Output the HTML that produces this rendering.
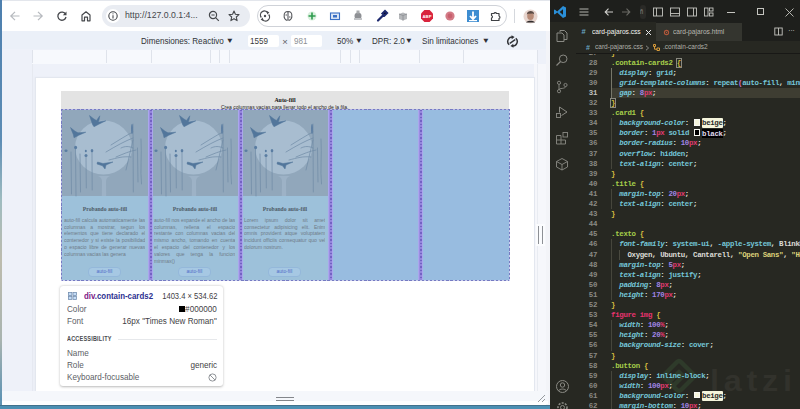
<!DOCTYPE html>
<html><head><meta charset="utf-8">
<style>
*{margin:0;padding:0;box-sizing:border-box}
html,body{width:800px;height:409px;overflow:hidden;background:#fff;font-family:"Liberation Sans",sans-serif}
.a{position:absolute}
.t{position:absolute;white-space:nowrap;line-height:1}
svg{position:absolute;overflow:visible}
/* browser */
#desk{left:0;top:0;width:2px;height:409px;background:linear-gradient(#4d7fae 0,#5d8db5 140px,#9fbcc0 200px,#bdbcae 260px,#a9b4b0 340px,#5f93b3 400px)}
#deskb{left:0;top:404.5px;width:550px;height:4.5px;background:#4b8fb3;border-top:1px solid #41718c}
#topline{left:2px;top:0;width:548px;height:1px;background:#e3e6ec}
#tb{left:2px;top:1px;width:548px;height:30px;background:#fff}
#dt{left:2px;top:31px;width:548px;height:18px;background:#ebf0f8}
#vp{left:2px;top:49px;width:548px;height:355px;background:#eef1f9}
#ruler{left:32px;top:49.5px;width:505px;height:14px;background:#f7f9fd}
.rl{position:absolute;top:50px;width:1px;height:13px;background:#dfe3eb}
#page{left:35.6px;top:77.6px;width:498px;height:313.7px;background:#fff;box-shadow:0 0 0 1px #e3e7ef,-1px 0 2px 1px #e9ecf3}
#botbar{left:2px;top:391.3px;width:546px;height:13.2px;background:linear-gradient(#f5f7fb 0,#f5f7fb 9.7px,#fdfeff 9.7px)}
.pill{position:absolute;border-radius:11px}
.dtt{font-size:9.1px;color:#303236;transform:scaleX(0.89);transform-origin:0 0}
.tri{font-size:7.5px;color:#2f3035;transform:scaleX(1.1)}
/* vscode */
#vs{left:550px;top:0;width:250px;height:409px;background:#272822;overflow:hidden}

.card{top:110px;width:88px;height:170.3px;background:#9dc1da;overflow:hidden}
.ctitle{position:absolute;top:206.6px;width:88px;text-align:center;font:bold 5.67px/1 'Liberation Serif',serif;color:#4d5a66;white-space:nowrap}
.ctext{position:absolute;top:216.8px;width:81.3px;font-size:5px;line-height:6.8px;color:#6f7c88}
.ctext div{text-align:justify;text-align-last:justify;white-space:nowrap;overflow:hidden}
.ctext div.l{text-align-last:left}
.cbtn{position:absolute;top:267.4px;width:32.2px;height:9.4px;border:0.8px solid #94b8da;border-radius:4px;font-size:4.93px;line-height:7.8px;text-align:center;color:#4f6cc8;background:#a6c8e3}
.gap{position:absolute;top:110px;width:5px;height:170.3px;background:#9a8de2;border-left:0.6px solid #aaa6ec;border-right:0.6px solid #aaa6ec}.gap::after{content:"";position:absolute;left:1.2px;top:0;width:2px;height:100%;background:repeating-linear-gradient(180deg,#7461c4 0,#7461c4 1.4px,#9486dc 1.4px,#9486dc 3.4px)}

.tipt{font-size:9.2px;color:#5d6066;transform:scaleX(0.885);transform-origin:0 0}.tipt.r{transform-origin:100% 0}

.vtab{font-size:7.5px;color:#fff;transform:scaleX(0.885);transform-origin:0 0}
.vbc{font-size:7.4px;color:#b0b0a9;transform:scaleX(0.885);transform-origin:0 0}
.ln{position:absolute;left:579.2px;width:17.8px;text-align:right;font:bold 7.4px/10.1px "Liberation Mono",monospace;letter-spacing:-0.34px;color:#8a8a84;height:10.1px}
.ln.cur{color:#c2c2bf}
.cl{position:absolute;left:611.1px;white-space:pre;font:bold 7.4px/10.1px "Liberation Mono",monospace;letter-spacing:-0.34px;color:#f8f8f2;height:10.1px}
.ks{color:#a6cf4a}.kb,.kbb{color:#d4bd40}.kbb{outline:0.8px solid #8a8a80;outline-offset:-0.4px}
.kp{color:#74c6d8;font-style:italic}.ko{color:#e4e4de}.kv{color:#74c6d8}.kn{color:#a086e6}.ku{color:#e03a70}
.kq{color:#ddd27a}.kt{color:#e8336f}.kw{color:#dcdcd6}.kf{color:#da70d6}
.sw{display:inline-block;width:9px;height:6.4px;position:relative;vertical-align:-0.5px}
.sw::after{content:"";position:absolute;left:1.2px;top:0;width:6px;height:6.4px;background:#f5f5dc;border:0.8px solid #f8f8f2;box-sizing:border-box}
.sw.sk::after{background:#000}
.khl{background:#f5f5dc;color:#2a2a26;padding:0.8px 0 0.9px;border-radius:1px}
.khk{background:#000;color:#e0dcf0;padding:0.8px 0 0.9px}
</style></head>
<body>
<div id="desk" class="a"></div>
<div id="deskb" class="a"></div>
<div id="topline" class="a"></div>
<div id="tb" class="a"></div>
<!-- nav icons -->
<svg style="left:9px;top:10px" width="12" height="12" viewBox="0 0 12 12"><path d="M10.5 6H2M6 1.8L1.8 6 6 10.2" fill="none" stroke="#b6b9be" stroke-width="1.2"/></svg>
<svg style="left:32px;top:10px" width="12" height="12" viewBox="0 0 12 12"><path d="M1.5 6H10M6 1.8L10.2 6 6 10.2" fill="none" stroke="#b6b9be" stroke-width="1.2"/></svg>
<svg style="left:55.5px;top:10px" width="12" height="12" viewBox="0 0 12 12"><path d="M9.6 4.2A4.1 4.1 0 1 0 10 7" fill="none" stroke="#45474b" stroke-width="1.3"/><path d="M10.5 1.5V5.2H6.8Z" fill="#45474b"/></svg>
<svg style="left:79.5px;top:10px" width="12" height="12" viewBox="0 0 12 12"><path d="M2 10.8V5L6 1.8 10 5V10.8H7.5V7.2H4.5V10.8Z" fill="none" stroke="#45474b" stroke-width="1.2" stroke-linejoin="round"/></svg>
<!-- address bar -->
<div class="pill" style="left:102px;top:5px;width:148px;height:22px;background:#e9ecf2"></div>
<div class="a" style="left:106px;top:9px;width:14px;height:14px;border-radius:7px;background:#fff"></div>
<svg style="left:108px;top:11px" width="10" height="10" viewBox="0 0 10 10"><circle cx="5" cy="5" r="4.2" fill="none" stroke="#45474b" stroke-width="1.1"/><path d="M5 4.2V7.4" stroke="#45474b" stroke-width="1.1"/><circle cx="5" cy="2.8" r="0.6" fill="#45474b"/></svg>
<div class="t" style="left:125px;top:10.3px;font-size:9.8px;color:#45474b;transform:scaleX(0.89);transform-origin:0 0">http://127.0.0.1:4...</div>
<svg style="left:208px;top:10px" width="12" height="12" viewBox="0 0 12 12"><circle cx="5" cy="5" r="3.6" fill="none" stroke="#45474b" stroke-width="1.2"/><path d="M7.6 7.6L10.8 10.8M3.4 5H6.6" stroke="#45474b" stroke-width="1.2"/></svg>
<svg style="left:228px;top:9.5px" width="12" height="12" viewBox="0 0 12 12"><path d="M6 1L7.4 4.3 11 4.6 8.3 7 9.1 10.6 6 8.7 2.9 10.6 3.7 7 1 4.6 4.6 4.3Z" fill="none" stroke="#45474b" stroke-width="1.1" stroke-linejoin="round"/></svg>
<!-- extensions pill -->
<div class="pill" style="left:257px;top:5px;width:250px;height:22px;background:#fff;border:1px solid #cfd2d8"></div>
<svg style="left:259px;top:9.5px" width="12" height="12" viewBox="0 0 12 12"><path d="M2.3 7.5A4 4 0 0 1 8.8 2.6M9.7 4.5A4 4 0 0 1 3.2 9.4" fill="none" stroke="#4a4c50" stroke-width="1.3"/><path d="M7.2 1L10.4 2.2 8.4 4.6Z M4.8 11L1.6 9.8 3.6 7.4Z" fill="#4a4c50"/><circle cx="6" cy="6" r="1.2" fill="#4a4c50"/></svg>
<svg style="left:282px;top:9.5px" width="12" height="12" viewBox="0 0 12 12"><path d="M6 1.5C3 1.5 2 3.5 2.2 5.5 1.8 7.5 3 10 5 10.2V11M6 1.5C9 1.5 10 3.5 9.8 5.5 10.2 7.5 9 10 7 10.2V11M6 2V10" fill="none" stroke="#55575b" stroke-width="1.1"/><path d="M3.5 5H5M7 7H8.5" stroke="#55575b" stroke-width="1"/></svg>
<svg style="left:306px;top:10px" width="12" height="12" viewBox="0 0 12 12"><circle cx="6" cy="6" r="4.5" fill="#d8efdc"/><path d="M6 2.5V9.5M2.5 6H9.5" stroke="#2e9b4e" stroke-width="1.6"/></svg>
<svg style="left:329px;top:10px" width="12" height="12" viewBox="0 0 12 12"><rect x="1.5" y="3" width="9" height="6.5" fill="#dde6f5" stroke="#3a6fc4" stroke-width="1.1"/><rect x="4" y="5" width="4" height="2.5" fill="#3a6fc4"/></svg>
<svg style="left:352px;top:9px" width="12" height="12" viewBox="0 0 12 12"><ellipse cx="6" cy="7" rx="3.5" ry="3.5" fill="#8e9094"/><rect x="4.5" y="1.5" width="3" height="3" fill="#a9abae"/><rect x="2" y="9" width="8" height="2" fill="#c2c4c7"/></svg>
<svg style="left:376px;top:9.5px" width="12" height="12" viewBox="0 0 12 12"><path d="M2 10.5L7.5 5M6.5 3.5L9 1 11 3 8.5 5.5Z" stroke="#1e2a6e" stroke-width="2.2" stroke-linecap="round"/></svg>
<svg style="left:397px;top:9.5px" width="12" height="12" viewBox="0 0 12 12"><path d="M2 4L6 2.5 10 4V9L6 10.5 2 9Z" fill="#b5b7ba"/><path d="M6 5.5V10.5M2 4L6 5.5 10 4" stroke="#8f9195" stroke-width="0.9" fill="none"/></svg>
<svg style="left:420px;top:9px" width="14" height="14" viewBox="0 0 14 14"><path d="M4.4 1H9.6L13 4.4V9.6L9.6 13H4.4L1 9.6V4.4Z" fill="#d9243d"/><text x="7" y="8.8" font-size="4.2" font-family="Liberation Sans" font-weight="bold" fill="#fff" text-anchor="middle">ABP</text></svg>
<svg style="left:444px;top:9.5px" width="12" height="12" viewBox="0 0 12 12"><circle cx="6" cy="6" r="4.6" fill="#d37b86"/><circle cx="6" cy="6" r="2.4" fill="#c8606e"/></svg>
<svg style="left:466px;top:8.5px" width="14" height="14" viewBox="0 0 14 14"><rect x="1" y="1" width="12" height="12" fill="#3d8dd1"/><path d="M7 2.5V10M4 7L7 10.2 10 7" stroke="#fff" stroke-width="1.8" fill="none"/><rect x="3" y="11" width="8" height="1.2" fill="#fff"/></svg>
<svg style="left:490px;top:9.5px" width="12" height="12" viewBox="0 0 12 12"><path d="M1.5 3.5H4A1.3 1.3 0 0 1 6.5 3.5H9V6A1.3 1.3 0 0 1 9 8.5V10.5H1.5V8A1.3 1.3 0 0 0 1.5 5.5Z" fill="none" stroke="#3f4145" stroke-width="1.2" stroke-linejoin="round"/></svg>
<div class="a" style="left:514px;top:9px;width:1px;height:14px;background:#d5d8dd"></div>
<svg style="left:523px;top:8.5px" width="15" height="15" viewBox="0 0 15 15"><circle cx="7.5" cy="7.5" r="7" fill="#e8d6cf"/><ellipse cx="7.5" cy="7" rx="3.3" ry="4" fill="#b88c78"/><path d="M3.8 5.5C4 2.8 6 2 7.6 2 9.4 2 11.2 3 11.2 5.4L10 4.6 5 4.8Z" fill="#5a4a44"/><path d="M3 13.5C4 11 11 11 12 13.5Z" fill="#2f2b2c"/></svg>

<!-- devtools toolbar -->
<div id="dt" class="a"></div>
<div class="t dtt" style="left:140.6px;top:36.6px">Dimensiones: Reactivo</div>
<div class="t tri" style="left:225.5px;top:36.6px">&#9660;</div>
<div class="a" style="left:248px;top:35px;width:31px;height:12px;background:#fff;border-radius:2px"></div>
<div class="t dtt" style="left:249.6px;top:36.6px;color:#3a3c40">1559</div>
<div class="t" style="left:282.3px;top:36.8px;font-size:9.5px;color:#5a5d63">&#215;</div>
<div class="a" style="left:291px;top:35px;width:31px;height:12px;background:#fff;border-radius:2px"></div>
<div class="t dtt" style="left:293.8px;top:36.6px;color:#8d9096">981</div>
<div class="t dtt" style="left:336.5px;top:36.6px">50%</div>
<div class="t tri" style="left:355px;top:36.6px">&#9660;</div>
<div class="t dtt" style="left:371.7px;top:36.6px">DPR: 2.0</div>
<div class="t tri" style="left:405px;top:36.6px">&#9660;</div>
<div class="t dtt" style="left:422px;top:36.6px">Sin limitaciones</div>
<div class="t tri" style="left:482px;top:36.6px">&#9660;</div>
<svg style="left:505.5px;top:34.5px" width="13" height="13" viewBox="0 0 13 13"><path d="M3.2 9.8A4.5 4.5 0 0 1 6.5 2M9.8 3.2A4.5 4.5 0 0 1 6.5 11" fill="none" stroke="#303236" stroke-width="1.5"/><path d="M5.5 0.3L8.6 2.1 5.7 4.2Z M7.5 12.7L4.4 10.9 7.3 8.8Z" fill="#303236"/><path d="M3.8 8.3L9.2 4.7" stroke="#303236" stroke-width="1.4"/></svg>

<!-- viewport -->
<div id="vp" class="a"></div>
<div id="ruler" class="a"></div>
<div class="rl" style="left:32px"></div>
<div class="rl" style="left:105.5px"></div>
<div class="rl" style="left:150.5px"></div>
<div class="rl" style="left:210px"></div>
<div class="rl" style="left:219px"></div>
<div class="rl" style="left:229px"></div>
<div class="rl" style="left:340px"></div>
<div class="rl" style="left:349.5px"></div>
<div class="rl" style="left:358.5px"></div>
<div class="rl" style="left:418.5px"></div>
<div class="rl" style="left:463px"></div>
<div class="rl" style="left:536.5px"></div>
<div class="a" style="left:533.6px;top:63.5px;width:12.5px;height:328px;background:#f6f7fb"></div>
<div class="a" style="left:546.1px;top:31px;width:3.5px;height:373.5px;background:#f3f4f8"></div>
<div class="a" style="left:32.2px;top:63.5px;width:1px;height:328px;background:#e6e9f0"></div>
<div class="a" style="left:536.6px;top:63.5px;width:1px;height:328px;background:#e9ecf2"></div>
<div id="page" class="a"></div>
<div class="a" style="left:535.5px;top:224px;width:9px;height:22px;background:#fbfcfe"></div>
<div class="a" style="left:538.2px;top:226px;width:1.1px;height:18.3px;background:#8d9095"></div>
<div class="a" style="left:541.6px;top:226px;width:1.1px;height:18.3px;background:#8d9095"></div>
<div id="botbar" class="a"></div>
<div class="a" style="left:276px;top:396.5px;width:18px;height:1px;background:#83868b"></div>
<div class="a" style="left:276px;top:399.5px;width:18px;height:1px;background:#83868b"></div>
<svg style="left:536px;top:393px" width="10" height="10" viewBox="0 0 10 10"><path d="M2 9L9 2M6 9L9 6" stroke="#8b8e93" stroke-width="0.9"/></svg>

<!--PAGE-->
<div class="a" style="left:61px;top:90.8px;width:447.6px;height:19.5px;background:#e3e3e3"></div>
<div class="t" style="left:274.4px;top:97px;font:bold 5.87px 'Liberation Serif',serif;color:#111">Auto-fill</div>
<div class="t" style="left:221px;top:104.6px;font-size:5px;color:#222">Crea columnas vacías para llenar todo el ancho de la fila.</div>

<!-- grid overlay base (empty cols) -->
<div class="a" style="left:61px;top:110px;width:448.5px;height:170.3px;background:#98bce0"></div>
<!-- cards -->
<div class="a card" style="left:61px"><svg width="88" height="86" style="left:0;top:0" viewBox="0 0 88 86"><g>
   <rect x="0" y="0" width="88" height="86" fill="#91a7bb"/>
   <ellipse cx="42.5" cy="37.5" rx="28.5" ry="27" fill="#a8bdd0"/>
   <path d="M37 66 C40 67 41 69 41 72 L40.8 86 L45.2 86 L45 72 C45 69 46 67 49 66Z" fill="#9db2c6"/>
   <g fill="#52769b" stroke="#52769b" stroke-width="0.5" stroke-linejoin="round">
    <path d="M28.5 5.5 C31 7.5 33.5 9.5 35.5 10.5 L38.8 5.8 C38.4 8.5 38 10.5 37.5 12 L44.8 10.8 L37.8 14.2 L33 16.8 L31.5 14.5 C30.5 11.5 29.5 8.5 28.5 5.5Z"/>
    <path d="M9.5 17.5 C11.8 19.5 14.5 21.8 17 22.8 L24.8 22.2 L17.8 25.2 L13 27.8 L12.3 24.5 C11.3 22 10.3 19.8 9.5 17.5Z"/>
    <path d="M36.5 52 L42 53.5 L52 52 L45 55 L44 59 L41.5 55.8 L36 54 Z"/>
   </g>
   <g stroke="#6f8aa5" stroke-width="0.7" fill="none" stroke-linecap="round">
    <path d="M10 42 L10.5 84 M14.5 38 L15 86 M19 44 L19.5 82 M25 46 L25.3 78 M31 42 L31.2 80"/>
    <path d="M72 14 L72.3 82 M80 29 C81 45 79 60 80.5 74 M76.5 38 L77 72"/>
    <path d="M45 42 C55 36 64 31 72 28 M50 35 C58 30 66 25 72 22 M55 47 C62 44 69 41 75 40 M72 30 C70 40 67 50 65 60 M60 38 C64 36 68 36 72 38 M48 50 C56 48 62 46 70 47"/>
   </g>
   <g fill="#5a7da2">
    <ellipse cx="5" cy="40.7" rx="1.6" ry="1.2"/><ellipse cx="14.6" cy="37.5" rx="1.5" ry="1.8"/><ellipse cx="25" cy="45.5" rx="1.5" ry="1.6"/>
    <ellipse cx="31" cy="40.7" rx="1.3" ry="1.6"/><ellipse cx="24.8" cy="41" rx="1" ry="1.2"/>
    <ellipse cx="71" cy="19" rx="0.9" ry="5"/>
   </g>
  </g></svg></div>
<div class="a card" style="left:151px"><svg width="88" height="86" style="left:0;top:0" viewBox="0 0 88 86"><g>
   <rect x="0" y="0" width="88" height="86" fill="#91a7bb"/>
   <ellipse cx="42.5" cy="37.5" rx="28.5" ry="27" fill="#a8bdd0"/>
   <path d="M37 66 C40 67 41 69 41 72 L40.8 86 L45.2 86 L45 72 C45 69 46 67 49 66Z" fill="#9db2c6"/>
   <g fill="#52769b" stroke="#52769b" stroke-width="0.5" stroke-linejoin="round">
    <path d="M28.5 5.5 C31 7.5 33.5 9.5 35.5 10.5 L38.8 5.8 C38.4 8.5 38 10.5 37.5 12 L44.8 10.8 L37.8 14.2 L33 16.8 L31.5 14.5 C30.5 11.5 29.5 8.5 28.5 5.5Z"/>
    <path d="M9.5 17.5 C11.8 19.5 14.5 21.8 17 22.8 L24.8 22.2 L17.8 25.2 L13 27.8 L12.3 24.5 C11.3 22 10.3 19.8 9.5 17.5Z"/>
    <path d="M36.5 52 L42 53.5 L52 52 L45 55 L44 59 L41.5 55.8 L36 54 Z"/>
   </g>
   <g stroke="#6f8aa5" stroke-width="0.7" fill="none" stroke-linecap="round">
    <path d="M10 42 L10.5 84 M14.5 38 L15 86 M19 44 L19.5 82 M25 46 L25.3 78 M31 42 L31.2 80"/>
    <path d="M72 14 L72.3 82 M80 29 C81 45 79 60 80.5 74 M76.5 38 L77 72"/>
    <path d="M45 42 C55 36 64 31 72 28 M50 35 C58 30 66 25 72 22 M55 47 C62 44 69 41 75 40 M72 30 C70 40 67 50 65 60 M60 38 C64 36 68 36 72 38 M48 50 C56 48 62 46 70 47"/>
   </g>
   <g fill="#5a7da2">
    <ellipse cx="5" cy="40.7" rx="1.6" ry="1.2"/><ellipse cx="14.6" cy="37.5" rx="1.5" ry="1.8"/><ellipse cx="25" cy="45.5" rx="1.5" ry="1.6"/>
    <ellipse cx="31" cy="40.7" rx="1.3" ry="1.6"/><ellipse cx="24.8" cy="41" rx="1" ry="1.2"/>
    <ellipse cx="71" cy="19" rx="0.9" ry="5"/>
   </g>
  </g></svg></div>
<div class="a card" style="left:241px"><svg width="88" height="86" style="left:0;top:0" viewBox="0 0 88 86"><g>
   <rect x="0" y="0" width="88" height="86" fill="#91a7bb"/>
   <ellipse cx="42.5" cy="37.5" rx="28.5" ry="27" fill="#a8bdd0"/>
   <path d="M37 66 C40 67 41 69 41 72 L40.8 86 L45.2 86 L45 72 C45 69 46 67 49 66Z" fill="#9db2c6"/>
   <g fill="#52769b" stroke="#52769b" stroke-width="0.5" stroke-linejoin="round">
    <path d="M28.5 5.5 C31 7.5 33.5 9.5 35.5 10.5 L38.8 5.8 C38.4 8.5 38 10.5 37.5 12 L44.8 10.8 L37.8 14.2 L33 16.8 L31.5 14.5 C30.5 11.5 29.5 8.5 28.5 5.5Z"/>
    <path d="M9.5 17.5 C11.8 19.5 14.5 21.8 17 22.8 L24.8 22.2 L17.8 25.2 L13 27.8 L12.3 24.5 C11.3 22 10.3 19.8 9.5 17.5Z"/>
    <path d="M36.5 52 L42 53.5 L52 52 L45 55 L44 59 L41.5 55.8 L36 54 Z"/>
   </g>
   <g stroke="#6f8aa5" stroke-width="0.7" fill="none" stroke-linecap="round">
    <path d="M10 42 L10.5 84 M14.5 38 L15 86 M19 44 L19.5 82 M25 46 L25.3 78 M31 42 L31.2 80"/>
    <path d="M72 14 L72.3 82 M80 29 C81 45 79 60 80.5 74 M76.5 38 L77 72"/>
    <path d="M45 42 C55 36 64 31 72 28 M50 35 C58 30 66 25 72 22 M55 47 C62 44 69 41 75 40 M72 30 C70 40 67 50 65 60 M60 38 C64 36 68 36 72 38 M48 50 C56 48 62 46 70 47"/>
   </g>
   <g fill="#5a7da2">
    <ellipse cx="5" cy="40.7" rx="1.6" ry="1.2"/><ellipse cx="14.6" cy="37.5" rx="1.5" ry="1.8"/><ellipse cx="25" cy="45.5" rx="1.5" ry="1.6"/>
    <ellipse cx="31" cy="40.7" rx="1.3" ry="1.6"/><ellipse cx="24.8" cy="41" rx="1" ry="1.2"/>
    <ellipse cx="71" cy="19" rx="0.9" ry="5"/>
   </g>
  </g></svg></div>
<div class="ctitle" style="left:61px">Probando auto-fill</div>
<div class="ctitle" style="left:151px">Probando auto-fill</div>
<div class="ctitle" style="left:241px">Probando auto-fill</div>
<div class="ctext" style="left:64px">
 <div>auto-fill calcula automaticamente las</div>
 <div>columnas a mostrar, segun los</div>
 <div>elementos que tiene declarado el</div>
 <div>contenedor y si existe la posibilidad</div>
 <div>o espacio libre de generar nuevas</div>
 <div class="l">columnas vacias las genera</div>
</div>
<div class="ctext" style="left:154px">
 <div>auto-fill nos expande el ancho de las</div>
 <div>columnas, rellena el espacio</div>
 <div>restante con columnas vacias del</div>
 <div>mismo ancho, tomando en cuenta</div>
 <div>el espacio del contenedor y los</div>
 <div>valores que tenga la funcion</div>
 <div class="l">minmax()</div>
</div>
<div class="ctext" style="left:244px">
 <div>Lorem ipsum dolor sit amet</div>
 <div>consectetur adipisicing elit. Enim</div>
 <div>omnis provident atque voluptatem</div>
 <div>incidunt officiis consequatur quo vel</div>
 <div class="l">dolorum nostrum.</div>
</div>
<div class="cbtn" style="left:88.4px">auto-fill</div>
<div class="cbtn" style="left:178.4px">auto-fill</div>
<div class="cbtn" style="left:268.4px">auto-fill</div>
<!-- gaps -->
<div class="gap" style="left:147.5px"></div>
<div class="gap" style="left:237.5px"></div>
<div class="gap" style="left:327.5px"></div>
<div class="gap" style="left:417.5px"></div>
<!-- grid outline -->
<div class="a" style="left:60.5px;top:109.3px;width:449.5px;height:1px;background:repeating-linear-gradient(90deg,#757bc2 0,#757bc2 2.2px,#b6b8e6 2.2px,#b6b8e6 4.1px)"></div>
<div class="a" style="left:60.5px;top:279.8px;width:449.5px;height:1px;background:repeating-linear-gradient(90deg,#757bc2 0,#757bc2 2.2px,#c9cdee 2.2px,#c9cdee 4.1px)"></div>
<div class="a" style="left:61px;top:109.3px;width:1px;height:171.5px;background:repeating-linear-gradient(180deg,#757bc2 0,#757bc2 2.2px,#b6b8e6 2.2px,#b6b8e6 4.1px)"></div>
<div class="a" style="left:508.8px;top:109.3px;width:1px;height:171.5px;background:repeating-linear-gradient(180deg,#757bc2 0,#757bc2 2.2px,#c9cdee 2.2px,#c9cdee 4.1px)"></div>


<!-- tooltip -->
<div class="a" style="left:60.3px;top:285.5px;width:162.5px;height:100.5px;background:#fff;border-radius:3px;box-shadow:0 0.5px 2.5px rgba(0,0,0,0.28)"></div>
<svg style="left:67.5px;top:291.8px" width="9" height="8" viewBox="0 0 9 8"><rect x="0.5" y="0.5" width="3.4" height="3" fill="#c4dcf6" stroke="#6f8aad" stroke-width="0.75"/><rect x="5" y="0.5" width="3.4" height="3" fill="#c4dcf6" stroke="#6f8aad" stroke-width="0.75"/><rect x="0.5" y="4.5" width="3.4" height="3" fill="#c4dcf6" stroke="#6f8aad" stroke-width="0.75"/><rect x="5" y="4.5" width="3.4" height="3" fill="#c4dcf6" stroke="#6f8aad" stroke-width="0.75"/></svg>
<div class="t" style="left:83.8px;top:291.6px;font-size:9px;font-weight:bold;transform:scaleX(0.875);transform-origin:0 0"><span style="color:#7d1a86">div</span><span style="color:#2b2f8f">.contain-cards2</span></div>
<div class="t tipt r" style="right:583px;top:292.0px;color:#3f4145;font-size:8.6px">1403.4 × 534.62</div>
<div class="t tipt" style="left:66.6px;top:305.0px">Color</div>
<div class="a" style="left:179px;top:306.4px;width:5.5px;height:5.5px;background:#000"></div>
<div class="t tipt r" style="right:583px;top:305.0px;color:#3f4145">#000000</div>
<div class="t tipt" style="left:66.6px;top:317.4px">Font</div>
<div class="t tipt r" style="right:583px;top:317.4px;color:#3f4145">16px "Times New Roman"</div>
<div class="t" style="left:66.7px;top:336.2px;font-size:6.4px;font-weight:bold;letter-spacing:0.25px;color:#4a4c50;transform:scaleX(0.86);transform-origin:0 0">ACCESSIBILITY</div>
<div class="a" style="left:118px;top:339px;width:99px;height:1px;background:#e6e8eb"></div>
<div class="t tipt" style="left:66.6px;top:348.8px">Name</div>
<div class="t tipt" style="left:66.6px;top:360.8px">Role</div>
<div class="t tipt r" style="right:583px;top:360.8px;color:#3f4145">generic</div>
<div class="t tipt" style="left:66.6px;top:373.0px">Keyboard-focusable</div>
<svg style="left:208px;top:372.5px" width="9" height="9" viewBox="0 0 9 9"><circle cx="4.5" cy="4.5" r="3.6" fill="none" stroke="#85888d" stroke-width="0.9"/><path d="M2 2L7 7" stroke="#85888d" stroke-width="0.9"/></svg>

<!--VS-->
<div class="a" style="left:550px;top:0;width:250px;height:409px;background:#272822"></div>
<!-- title bar -->
<div class="a" style="left:550px;top:0;width:250px;height:22px;background:#1e1f1c"></div>
<svg style="left:553px;top:5px" width="14" height="14" viewBox="0 0 14 14"><path d="M10 1L13 2.5V11.5L10 13 4.2 7.6 1.8 9.5 1 9V5L1.8 4.5 4.2 6.4Z M10 4.2L6.6 7 10 9.8Z" fill="#2a8fd8" fill-rule="evenodd"/></svg>
<svg style="left:578px;top:6px" width="12" height="12" viewBox="0 0 12 12"><path d="M1.5 3H10.5M1.5 6H10.5M1.5 9H10.5" stroke="#c5c5c0" stroke-width="0.9"/></svg>
<svg style="left:603px;top:6px" width="12" height="12" viewBox="0 0 12 12"><path d="M10 6H2.2M5.5 2.7L2.2 6 5.5 9.3" fill="none" stroke="#d0d0cc" stroke-width="1.1"/></svg>
<svg style="left:620px;top:6px" width="12" height="12" viewBox="0 0 12 12"><path d="M2 6H9.8M6.5 2.7L9.8 6 6.5 9.3" fill="none" stroke="#6a6a65" stroke-width="1.1"/></svg>
<div class="a" style="left:639.5px;top:4.5px;width:6px;height:14px;border-radius:3px;background:#2a2a27"></div>
<div class="t" style="left:640.4px;top:8px;font-size:7px;color:#8a8a84;transform:scaleX(0.8);transform-origin:0 0">ñ</div>
<svg style="left:652px;top:6px" width="12" height="12" viewBox="0 0 12 12"><rect x="1.5" y="2" width="9" height="8" fill="none" stroke="#c5c5c0" stroke-width="0.9"/><path d="M4.5 2V10" stroke="#c5c5c0" stroke-width="0.9"/></svg>
<svg style="left:669px;top:6px" width="12" height="12" viewBox="0 0 12 12"><rect x="1.5" y="2" width="9" height="8" fill="none" stroke="#c5c5c0" stroke-width="0.9"/><path d="M1.5 7.5H10.5" stroke="#c5c5c0" stroke-width="0.9"/></svg>
<svg style="left:686px;top:6px" width="12" height="12" viewBox="0 0 12 12"><rect x="1.5" y="2" width="9" height="8" fill="none" stroke="#c5c5c0" stroke-width="0.9"/><path d="M7.5 2V10" stroke="#c5c5c0" stroke-width="0.9"/></svg>
<svg style="left:702.5px;top:6px" width="12" height="12" viewBox="0 0 12 12"><rect x="1.5" y="2" width="3.5" height="8" fill="none" stroke="#c5c5c0" stroke-width="0.9"/><rect x="6.5" y="2" width="3.5" height="3" fill="none" stroke="#c5c5c0" stroke-width="0.9"/><rect x="6.5" y="7" width="3.5" height="3" fill="none" stroke="#c5c5c0" stroke-width="0.9"/></svg>
<div class="a" style="left:727px;top:11.5px;width:8px;height:1px;background:#c5c5c0"></div>
<div class="a" style="left:756.5px;top:8px;width:7px;height:7px;border:1px solid #c5c5c0"></div>
<svg style="left:784px;top:6.5px" width="11" height="11" viewBox="0 0 11 11"><path d="M1.5 1.5L9.5 9.5M9.5 1.5L1.5 9.5" stroke="#c5c5c0" stroke-width="0.9"/></svg>
<!-- activity bar icons -->
<svg style="left:555px;top:29px" width="14" height="14" viewBox="0 0 14 14"><path d="M5 3V1.5H9.5L12 4V10.5H9" fill="none" stroke="#8a8a84" stroke-width="1"/><path d="M2 4H7L9 6V12.5H2Z" fill="none" stroke="#8a8a84" stroke-width="1"/></svg>
<svg style="left:555px;top:53px" width="14" height="14" viewBox="0 0 14 14"><circle cx="8.2" cy="5.8" r="3.8" fill="none" stroke="#8a8a84" stroke-width="1"/><path d="M5.5 8.5L1.5 12.5" stroke="#8a8a84" stroke-width="1.1"/></svg>
<svg style="left:555px;top:80px" width="14" height="14" viewBox="0 0 14 14"><circle cx="4" cy="2.8" r="1.6" fill="none" stroke="#8a8a84" stroke-width="0.9"/><circle cx="4" cy="11.2" r="1.6" fill="none" stroke="#8a8a84" stroke-width="0.9"/><circle cx="10.5" cy="5" r="1.6" fill="none" stroke="#8a8a84" stroke-width="0.9"/><path d="M4 4.4V9.6M10.5 6.6C10.5 9 4 8 4 9.6" fill="none" stroke="#8a8a84" stroke-width="0.9"/></svg>
<svg style="left:555px;top:105px" width="14" height="14" viewBox="0 0 14 14"><path d="M4.5 2L12 7 6.5 10.5M4.5 2V7.5" fill="none" stroke="#8a8a84" stroke-width="1" stroke-linejoin="round"/><rect x="1.5" y="8.5" width="4" height="4" fill="#272822" stroke="#8a8a84" stroke-width="0.9"/></svg>
<svg style="left:555px;top:130.5px" width="14" height="14" viewBox="0 0 14 14"><path d="M1.5 4.5H6V9H10.5V13H1.5Z M6 9V13 M1.5 9H6" fill="none" stroke="#8a8a84" stroke-width="0.9"/><rect x="8" y="1.5" width="4.5" height="4.5" fill="none" stroke="#8a8a84" stroke-width="0.9"/></svg>
<svg style="left:555px;top:157px" width="14" height="14" viewBox="0 0 14 14"><path d="M7 1.5L12.5 4.5V10L7 13 1.5 10V4.5Z M1.5 4.5L7 7.5 12.5 4.5 M7 7.5V13" fill="none" stroke="#8a8a84" stroke-width="0.9" stroke-linejoin="round"/></svg>
<svg style="left:555px;top:379px" width="15" height="15" viewBox="0 0 15 15"><circle cx="7.5" cy="7.5" r="6" fill="none" stroke="#8a8a84" stroke-width="1"/><circle cx="7.5" cy="6" r="2.2" fill="none" stroke="#8a8a84" stroke-width="1"/><path d="M3.6 11.8C4.5 9.5 10.5 9.5 11.4 11.8" fill="none" stroke="#8a8a84" stroke-width="1"/></svg>
<svg style="left:555px;top:400px" width="15" height="15" viewBox="0 0 15 15"><circle cx="7.5" cy="7.5" r="4.5" fill="none" stroke="#8a8a84" stroke-width="1.6" stroke-dasharray="2 1.3"/><circle cx="7.5" cy="7.5" r="2" fill="none" stroke="#8a8a84" stroke-width="1"/></svg>
<!-- tabs -->
<div class="a" style="left:576px;top:22px;width:224px;height:19px;background:#1e1f1c"></div>
<div class="a" style="left:576px;top:22px;width:80px;height:19px;background:#272822"></div>
<div class="a" style="left:656px;top:22.5px;width:85.5px;height:18.5px;background:#34352f"></div>
<div class="t" style="left:581.5px;top:28px;font-size:7.5px;font-weight:bold;color:#6aa6c4">#</div>
<div class="t vtab" style="left:591.6px;top:27.9px;color:#f4f4f0">card-pajaros.css</div>
<svg style="left:644.5px;top:28.5px" width="7" height="7" viewBox="0 0 7 7"><path d="M1 1L6 6M6 1L1 6" stroke="#e8e8e8" stroke-width="1"/></svg>
<svg style="left:663px;top:28.5px" width="7" height="7" viewBox="0 0 7 7"><circle cx="3.5" cy="3.5" r="2.1" fill="none" stroke="#b0573a" stroke-width="1.1"/><circle cx="3.5" cy="3.5" r="0.7" fill="#b0573a"/></svg>
<div class="t vtab" style="left:672.6px;top:27.9px;color:#b8b8b0">card-pajaros.html</div>
<svg style="left:774px;top:27px" width="9" height="9" viewBox="0 0 9 9"><rect x="0.8" y="1" width="7.4" height="7" fill="none" stroke="#c5c5c0" stroke-width="0.9"/><path d="M4.5 1V8" stroke="#c5c5c0" stroke-width="0.9"/></svg>
<div class="t" style="left:788px;top:26.5px;font-size:8px;color:#c5c5c0;letter-spacing:-0.5px">···</div>
<!-- breadcrumb -->
<div class="t" style="left:586px;top:43.5px;font-size:7px;font-weight:bold;color:#6aa6c4">#</div>
<div class="t vbc" style="left:595.3px;top:43.3px">card-pajaros.css</div>
<svg style="left:644.5px;top:44.5px" width="5" height="6" viewBox="0 0 5 6"><path d="M1 0.8L3.6 3 1 5.2" fill="none" stroke="#a0a09a" stroke-width="0.8"/></svg>
<svg style="left:651.5px;top:42.5px" width="9" height="9" viewBox="0 0 9 9"><path d="M1.5 1.5H3.5V3.5H1.5Z M5 5H7.5V7.5H5Z M2.5 3.5V6.2H5" fill="none" stroke="#d79b3a" stroke-width="1"/></svg>
<div class="t vbc" style="left:662.8px;top:43.3px">.contain-cards2</div>
<div class="a" style="left:576px;top:53.3px;width:224px;height:1.2px;background:#181816"></div>
<!-- watermark -->
<svg style="left:660px;top:356px" width="40" height="40" viewBox="0 0 40 40"><path d="M13 30 L5 22 Q3 20 5 18 L17 6 Q19 4 21 6 L33 18 Q35 20 33 22 L21 34 Q19 36 17 34 L13 30 L23 20 L19 16 L11 24" fill="none" stroke="#2e3a2a" stroke-width="4.5" stroke-linejoin="round" stroke-linecap="round"/></svg>
<div class="t" style="left:710px;top:364px;font:bold 30px 'Liberation Sans',sans-serif;color:#32322c;letter-spacing:4.4px;transform:scaleX(1.08);transform-origin:0 0">latzi</div>
<!-- current line -->
<div class="a" style="left:612px;top:87.9px;width:188px;height:10.1px;background:#3e3d32"></div>
<!--LINES--><div class="a" style="left:0;top:54px;width:800px;height:355px;overflow:hidden"><div class="a" style="left:0;top:-54px;width:800px;height:409px"><div class="a" style="left:610.90px;top:67.75px;width:1px;height:30.30px;background:#77776a"></div>
<div class="a" style="left:610.90px;top:118.25px;width:1px;height:50.50px;background:#46463c"></div>
<div class="a" style="left:610.90px;top:188.95px;width:1px;height:20.20px;background:#46463c"></div>
<div class="a" style="left:610.90px;top:239.45px;width:1px;height:60.60px;background:#46463c"></div>
<div class="a" style="left:610.90px;top:320.25px;width:1px;height:30.30px;background:#46463c"></div>
<div class="a" style="left:610.90px;top:370.75px;width:1px;height:40.40px;background:#46463c"></div>
<div class="a" style="left:619.10px;top:249.55px;width:1px;height:10.10px;background:#4a4a40"></div>
<div class="ln" style="top:47.55px">27</div>
<div class="cl" style="top:47.55px"><span class="kb">}</span></div>
<div class="ln" style="top:57.65px">28</div>
<div class="cl" style="top:57.65px"><span class="ks">.contain-cards2</span><span class="ko"> </span><span class="kbb">{</span></div>
<div class="ln" style="top:67.75px">29</div>
<div class="cl" style="top:67.75px"><span class="ko">  </span><span class="kp">display</span><span class="ko">: </span><span class="kv">grid</span><span class="ko">;</span></div>
<div class="ln" style="top:77.85px">30</div>
<div class="cl" style="top:77.85px"><span class="ko">  </span><span class="kp">grid-template-columns</span><span class="ko">: </span><span class="kv">repeat</span><span class="kf">(</span><span class="kv">auto-fill</span><span class="ko">, </span><span class="kv">minmax</span><span class="kf">(</span><span class="kn">100</span><span class="ku">px</span><span class="ko">, </span><span class="kn">1</span><span class="ku">fr</span><span class="kf">))</span><span class="ko">;</span></div>
<div class="ln cur" style="top:87.95px">31</div>
<div class="cl" style="top:87.95px"><span class="ko">  </span><span class="kp">gap</span><span class="ko">: </span><span class="kn">8</span><span class="ku">px</span><span class="ko">;</span></div>
<div class="ln" style="top:98.05px">32</div>
<div class="cl" style="top:98.05px"><span class="kbb">}</span></div>
<div class="ln" style="top:108.15px">33</div>
<div class="cl" style="top:108.15px"><span class="ks">.card1</span><span class="ko"> </span><span class="kb">{</span></div>
<div class="ln" style="top:118.25px">34</div>
<div class="cl" style="top:118.25px"><span class="ko">  </span><span class="kp">background-color</span><span class="ko">: </span><span class="sw"></span><span class="khl">beige</span><span class="ko">;</span></div>
<div class="ln" style="top:128.35px">35</div>
<div class="cl" style="top:128.35px"><span class="ko">  </span><span class="kp">border</span><span class="ko">: </span><span class="kn">1</span><span class="ku">px</span><span class="ko"> </span><span class="kv">solid</span><span class="ko"> </span><span class="sw sk"></span><span class="khk">black</span><span class="ko">;</span></div>
<div class="ln" style="top:138.45px">36</div>
<div class="cl" style="top:138.45px"><span class="ko">  </span><span class="kp">border-radius</span><span class="ko">: </span><span class="kn">10</span><span class="ku">px</span><span class="ko">;</span></div>
<div class="ln" style="top:148.55px">37</div>
<div class="cl" style="top:148.55px"><span class="ko">  </span><span class="kp">overflow</span><span class="ko">: </span><span class="kv">hidden</span><span class="ko">;</span></div>
<div class="ln" style="top:158.65px">38</div>
<div class="cl" style="top:158.65px"><span class="ko">  </span><span class="kp">text-align</span><span class="ko">: </span><span class="kv">center</span><span class="ko">;</span></div>
<div class="ln" style="top:168.75px">39</div>
<div class="cl" style="top:168.75px"><span class="kb">}</span></div>
<div class="ln" style="top:178.85px">40</div>
<div class="cl" style="top:178.85px"><span class="ks">.title</span><span class="ko"> </span><span class="kb">{</span></div>
<div class="ln" style="top:188.95px">41</div>
<div class="cl" style="top:188.95px"><span class="ko">  </span><span class="kp">margin-top</span><span class="ko">: </span><span class="kn">20</span><span class="ku">px</span><span class="ko">;</span></div>
<div class="ln" style="top:199.05px">42</div>
<div class="cl" style="top:199.05px"><span class="ko">  </span><span class="kp">text-align</span><span class="ko">: </span><span class="kv">center</span><span class="ko">;</span></div>
<div class="ln" style="top:209.15px">43</div>
<div class="cl" style="top:209.15px"><span class="kb">}</span></div>
<div class="ln" style="top:219.25px">44</div>
<div class="cl" style="top:219.25px"></div>
<div class="ln" style="top:229.35px">45</div>
<div class="cl" style="top:229.35px"><span class="ks">.texto</span><span class="ko"> </span><span class="kb">{</span></div>
<div class="ln" style="top:239.45px">46</div>
<div class="cl" style="top:239.45px"><span class="ko">  </span><span class="kp">font-family</span><span class="ko">: </span><span class="kv">system-ui</span><span class="ko">, </span><span class="kv">-apple-system</span><span class="ko">, </span><span class="kw">BlinkMacSystemFont</span><span class="ko">, </span><span class="kq">&#x27;Segoe UI&#x27;</span><span class="ko">, </span><span class="kw">Roboto,</span></div>
<div class="ln" style="top:249.55px">47</div>
<div class="cl" style="top:249.55px"><span class="ko">    </span><span class="kw">Oxygen</span><span class="ko">, </span><span class="kw">Ubuntu</span><span class="ko">, </span><span class="kw">Cantarell</span><span class="ko">, </span><span class="kq">&quot;Open Sans&quot;</span><span class="ko">, </span><span class="kq">&quot;Helvetica Neue&quot;</span><span class="ko">, </span><span class="kv">sans-serif</span><span class="ko">;</span></div>
<div class="ln" style="top:259.65px">48</div>
<div class="cl" style="top:259.65px"><span class="ko">  </span><span class="kp">margin-top</span><span class="ko">: </span><span class="kn">5</span><span class="ku">px</span><span class="ko">;</span></div>
<div class="ln" style="top:269.75px">49</div>
<div class="cl" style="top:269.75px"><span class="ko">  </span><span class="kp">text-align</span><span class="ko">: </span><span class="kv">justify</span><span class="ko">;</span></div>
<div class="ln" style="top:279.85px">50</div>
<div class="cl" style="top:279.85px"><span class="ko">  </span><span class="kp">padding</span><span class="ko">: </span><span class="kn">8</span><span class="ku">px</span><span class="ko">;</span></div>
<div class="ln" style="top:289.95px">51</div>
<div class="cl" style="top:289.95px"><span class="ko">  </span><span class="kp">height</span><span class="ko">: </span><span class="kn">170</span><span class="ku">px</span><span class="ko">;</span></div>
<div class="ln" style="top:300.05px">52</div>
<div class="cl" style="top:300.05px"><span class="kb">}</span></div>
<div class="ln" style="top:310.15px">53</div>
<div class="cl" style="top:310.15px"><span class="kt">figure img</span><span class="ko"> </span><span class="kb">{</span></div>
<div class="ln" style="top:320.25px">54</div>
<div class="cl" style="top:320.25px"><span class="ko">  </span><span class="kp">width</span><span class="ko">: </span><span class="kn">100</span><span class="ku">%</span><span class="ko">;</span></div>
<div class="ln" style="top:330.35px">55</div>
<div class="cl" style="top:330.35px"><span class="ko">  </span><span class="kp">height</span><span class="ko">: </span><span class="kn">20</span><span class="ku">%</span><span class="ko">;</span></div>
<div class="ln" style="top:340.45px">56</div>
<div class="cl" style="top:340.45px"><span class="ko">  </span><span class="kp">background-size</span><span class="ko">: </span><span class="kv">cover</span><span class="ko">;</span></div>
<div class="ln" style="top:350.55px">57</div>
<div class="cl" style="top:350.55px"><span class="kb">}</span></div>
<div class="ln" style="top:360.65px">58</div>
<div class="cl" style="top:360.65px"><span class="ks">.button</span><span class="ko"> </span><span class="kb">{</span></div>
<div class="ln" style="top:370.75px">59</div>
<div class="cl" style="top:370.75px"><span class="ko">  </span><span class="kp">display</span><span class="ko">: </span><span class="kv">inline-block</span><span class="ko">;</span></div>
<div class="ln" style="top:380.85px">60</div>
<div class="cl" style="top:380.85px"><span class="ko">  </span><span class="kp">width</span><span class="ko">: </span><span class="kn">100</span><span class="ku">px</span><span class="ko">;</span></div>
<div class="ln" style="top:390.95px">61</div>
<div class="cl" style="top:390.95px"><span class="ko">  </span><span class="kp">background-color</span><span class="ko">: </span><span class="sw"></span><span class="khl">beige</span><span class="ko">;</span></div>
<div class="ln" style="top:401.05px">62</div>
<div class="cl" style="top:401.05px"><span class="ko">  </span><span class="kp">margin-bottom</span><span class="ko">: </span><span class="kn">10</span><span class="ku">px</span><span class="ko">;</span></div></div></div><!--/LINES-->
<!--VSCODE-->

</body></html>
